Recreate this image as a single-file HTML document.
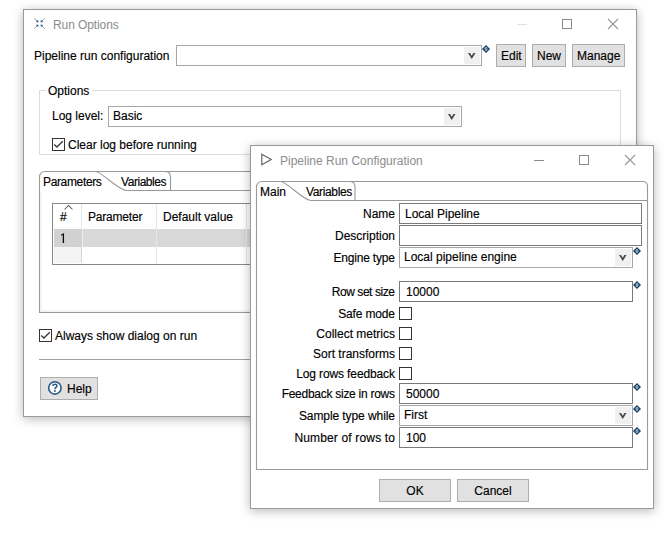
<!DOCTYPE html>
<html><head><meta charset="utf-8">
<style>
html,body{margin:0;padding:0;}
body{width:667px;height:546px;background:#fff;position:relative;overflow:hidden;font-family:"Liberation Sans",sans-serif;font-size:12px;color:#000;}
.a{position:absolute;box-sizing:border-box;}
.t{position:absolute;white-space:nowrap;font-size:12px;line-height:14px;-webkit-text-stroke:0.15px currentColor;}
.win{position:absolute;box-sizing:border-box;background:#fff;border:1px solid #9a9a9a;box-shadow:0 2px 10px rgba(0,0,0,0.28);}
.btn{position:absolute;box-sizing:border-box;background:#e1e1e1;border:1px solid #adadad;}
.fld{position:absolute;box-sizing:border-box;background:#fff;border:1px solid #7a7a7a;}
.cmb{position:absolute;box-sizing:border-box;background:#fff;border:1px solid #a6a6ae;}
.dd{position:absolute;background:#f0f0f0;}
.chk{position:absolute;box-sizing:border-box;width:13px;height:13px;border:1px solid #333;background:#fff;}
.ttl{color:#8c8c8c;-webkit-text-stroke:0;}
svg{position:absolute;overflow:visible;}
</style></head><body>

<!-- ================= RUN OPTIONS WINDOW ================= -->
<div class="win" style="left:23px;top:9px;width:614px;height:408px;"></div>

<!-- icon -->
<svg style="left:34px;top:18px" width="11" height="11" viewBox="0 0 11 11">
 <g stroke="#8aa3b9" stroke-width="1" stroke-linecap="round">
  <line x1="0.6" y1="0.6" x2="3.4" y2="3.4"/><line x1="10.4" y1="0.6" x2="7.6" y2="3.4"/>
  <line x1="0.6" y1="10.4" x2="3.4" y2="7.6"/><line x1="10.4" y1="10.4" x2="7.6" y2="7.6"/>
 </g>
 <g fill="#3f6889"><circle cx="3.4" cy="3.4" r="1.15"/><circle cx="7.6" cy="3.4" r="1.15"/><circle cx="3.4" cy="7.6" r="1.15"/><circle cx="7.6" cy="7.6" r="1.15"/></g>
</svg>
<div class="t ttl" style="left:53px;top:18px;letter-spacing:-0.1px">Run Options</div>
<div class="a" style="left:517px;top:24px;width:10px;height:1px;background:#e0e0e0"></div>
<div class="a" style="left:562px;top:19px;width:10px;height:10px;border:1px solid #8a8a8a"></div>
<svg style="left:608px;top:19px" width="10" height="10" viewBox="0 0 10 10"><path d="M0 0L10 10M10 0L0 10" stroke="#999" stroke-width="1.1"/></svg>

<div class="t" style="left:34px;top:49px;">Pipeline run configuration</div>
<div class="cmb" style="left:176px;top:45px;width:306px;height:21px;"></div>
<div class="dd" style="left:464px;top:47px;width:16px;height:17px;"></div>
<svg style="left:468px;top:53px" width="8" height="6" viewBox="0 0 8 6"><path d="M0 0H2.1L3.75 2.7L5.4 0H7.5L3.75 6Z" fill="#484848"/></svg>
<svg style="left:482px;top:45px" width="8" height="8" viewBox="0 0 8 8"><path d="M4 0L8 4L4 8L0 4Z" fill="#0f3c63"/><path d="M4 1.6L6.4 4L4 6.4L1.6 4Z" fill="#5a7b99"/><path d="M5 2.6Q4 2.2 3.3 2.9Q3 3.6 4 4Q5 4.4 4.7 5.1Q4 5.8 3 5.4" fill="none" stroke="#b9cad8" stroke-width="0.8"/></svg>

<div class="btn" style="left:496px;top:44px;width:30px;height:23px;"></div><div class="t" style="left:501px;top:49px;">Edit</div>
<div class="btn" style="left:532px;top:44px;width:34px;height:23px;"></div><div class="t" style="left:537px;top:49px;">New</div>
<div class="btn" style="left:572px;top:44px;width:53px;height:23px;"></div><div class="t" style="left:577px;top:49px;">Manage</div>

<!-- Options group -->
<div class="a" style="left:39px;top:90px;width:582px;height:65px;border:1px solid #dcdcdc;"></div>
<div class="a" style="left:46px;top:85px;width:46px;height:10px;background:#fff;"></div>
<div class="t" style="left:48px;top:84px;">Options</div>
<div class="t" style="left:52px;top:109px;">Log level:</div>
<div class="cmb" style="left:108px;top:106px;width:354px;height:21px;"></div>
<div class="t" style="left:113px;top:109px;">Basic</div>
<div class="dd" style="left:444px;top:108px;width:16px;height:17px;"></div>
<svg style="left:448px;top:114px" width="8" height="6" viewBox="0 0 8 6"><path d="M0 0H2.1L3.75 2.7L5.4 0H7.5L3.75 6Z" fill="#484848"/></svg>
<div class="chk" style="left:52px;top:138px;"></div>
<svg style="left:52px;top:138px" width="13" height="13" viewBox="0 0 13 13"><path d="M2.2 6.5L4.9 9.1L10.8 3.2" fill="none" stroke="#3a3a3a" stroke-width="1.35"/></svg>
<div class="t" style="left:68px;top:138px;">Clear log before running</div>

<!-- Tab folder RO -->
<svg style="left:0;top:0" width="667" height="546">
 <path d="M39.5 312.5V177.5C39.5 174 41.5 171.5 45.5 171.5H615.5Q620.5 171.5 620.5 176.5V312.5Z" fill="none" stroke="#999" stroke-width="1.1"/>
 <path d="M95.5 171.5C101.5 171.5 118.5 190.5 126.5 190.5H620.5" fill="none" stroke="#999" stroke-width="1.1"/>
 <path d="M165 171.5Q170.5 171.5 170.5 177V190.5" fill="none" stroke="#999" stroke-width="1.1"/>
</svg>
<div class="a" style="left:40px;top:192px;width:2px;height:120px;background:#f3f3f3"></div><div class="a" style="left:40px;top:310px;width:211px;height:2px;background:#f3f3f3"></div>
<div class="t" style="left:43px;top:175px;letter-spacing:-0.35px">Parameters</div>
<div class="t" style="left:121px;top:175px;letter-spacing:-0.45px">Variables</div>

<!-- table -->
<div class="a" style="left:52px;top:203px;width:560px;height:62px;border:1px solid #828790;"></div>
<div class="a" style="left:54px;top:229px;width:557px;height:18px;background:#d9d9d9;"></div><div class="a" style="left:54px;top:229px;width:27px;height:18px;background:#d1d1d1;"></div>

<div class="a" style="left:156px;top:204px;width:1px;height:25px;background:#e5e5e5;"></div>
<div class="a" style="left:246px;top:204px;width:1px;height:25px;background:#e5e5e5;"></div>
<div class="a" style="left:81px;top:204px;width:1px;height:25px;background:#e5e5e5;"></div><div class="a" style="left:54px;top:247px;width:27px;height:16px;background:#f4f4f4;"></div><div class="a" style="left:81px;top:229px;width:1px;height:34px;background:#cfd6e0;"></div><div class="a" style="left:82px;top:229px;width:1px;height:18px;background:#ececec;"></div>
<div class="a" style="left:156px;top:229px;width:1px;height:35px;background:#e3e8ef;"></div>
<div class="a" style="left:246px;top:229px;width:1px;height:35px;background:#e3e8ef;"></div>
<svg style="left:64px;top:205px" width="9" height="5" viewBox="0 0 9 5"><path d="M0.5 4.5L4.5 0.5L8.5 4.5" fill="none" stroke="#555" stroke-width="1.05"/></svg>
<div class="t" style="left:60px;top:210px;">#</div>
<div class="t" style="left:88px;top:210px;letter-spacing:-0.2px">Parameter</div>
<div class="t" style="left:163px;top:210px;">Default value</div>
<svg style="left:60px;top:233px" width="6" height="11" viewBox="0 0 6 11"><path d="M3.4 0.6V10" fill="none" stroke="#000" stroke-width="1.3"/><path d="M3.4 0.9L1 2.3" fill="none" stroke="#000" stroke-width="1"/></svg>

<div class="chk" style="left:39px;top:329px;"></div>
<svg style="left:39px;top:329px" width="13" height="13" viewBox="0 0 13 13"><path d="M2.2 6.5L4.9 9.1L10.8 3.2" fill="none" stroke="#3a3a3a" stroke-width="1.35"/></svg>
<div class="t" style="left:55px;top:329px;">Always show dialog on run</div>
<div class="a" style="left:39px;top:359px;width:582px;height:1px;background:#a0a0a0;"></div>

<div class="btn" style="left:40px;top:377px;width:58px;height:23px;"></div>
<svg style="left:47px;top:380px" width="16" height="16" viewBox="0 0 16 16"><circle cx="7.9" cy="7.9" r="6.2" fill="#fff" stroke="#2d5c85" stroke-width="1.6"/><path d="M5.9 6.1Q5.9 4.2 7.9 4.2Q9.9 4.2 9.9 5.9Q9.9 6.9 8.8 7.5Q7.9 8 7.9 9.3" fill="none" stroke="#2d5c85" stroke-width="1.5"/><circle cx="7.9" cy="11" r="0.95" fill="#2d5c85"/></svg>
<div class="t" style="left:67px;top:382px;">Help</div>

<!-- ================= PIPELINE RUN CONFIGURATION WINDOW ================= -->
<div class="win" style="left:250px;top:145px;width:404px;height:364px;"></div>
<svg style="left:261px;top:154px" width="11" height="11" viewBox="0 0 11 11"><path d="M0.8 0.3L10.2 5.4L0.8 10.8Z" fill="none" stroke="#666" stroke-width="1.2" stroke-linejoin="miter"/></svg>
<div class="t ttl" style="left:280px;top:154px;">Pipeline Run Configuration</div>
<div class="a" style="left:534px;top:160px;width:10px;height:1px;background:#8a8a8a"></div>
<div class="a" style="left:579px;top:155px;width:10px;height:10px;border:1px solid #8a8a8a"></div>
<svg style="left:625px;top:155px" width="10" height="10" viewBox="0 0 10 10"><path d="M0 0L10 10M10 0L0 10" stroke="#999" stroke-width="1.1"/></svg>

<svg style="left:0;top:0" width="667" height="546">
 <path d="M256.5 469.5V187.5C256.5 184 258.5 181.5 262.5 181.5H642.5Q647.5 181.5 647.5 186.5V469.5Z" fill="none" stroke="#999" stroke-width="1.1"/>
 <path d="M280.5 181.5C286.5 181.5 303.5 200.5 311 200.5H647.5" fill="none" stroke="#999" stroke-width="1.1"/>
 <path d="M349.5 181.5Q355 181.5 355 187V200.5" fill="none" stroke="#999" stroke-width="1.1"/>
</svg>
<div class="t" style="left:260px;top:185px;">Main</div>
<div class="t" style="left:306px;top:185px;letter-spacing:-0.35px">Variables</div>

<div class="t" style="left:0;width:395px;text-align:right;top:207px;">Name</div>
<div class="fld" style="left:399px;top:203px;width:243px;height:21px;"></div>
<div class="t" style="left:405px;top:207px;">Local Pipeline</div>

<div class="t" style="left:0;width:395px;text-align:right;top:229px;">Description</div>
<div class="fld" style="left:399px;top:225px;width:243px;height:21px;"></div>

<div class="t" style="left:0;width:394.82px;text-align:right;top:251px;letter-spacing:-0.18px">Engine type</div>
<div class="cmb" style="left:399px;top:247px;width:234px;height:21px;"></div>
<div class="t" style="left:404px;top:250px;">Local pipeline engine</div>
<div class="dd" style="left:615px;top:249px;width:16px;height:17px;"></div>
<svg style="left:619px;top:255px" width="8" height="6" viewBox="0 0 8 6"><path d="M0 0H2.1L3.75 2.7L5.4 0H7.5L3.75 6Z" fill="#484848"/></svg>
<svg style="left:633px;top:247px" width="8" height="8" viewBox="0 0 8 8"><path d="M4 0L8 4L4 8L0 4Z" fill="#0f3c63"/><path d="M4 1.6L6.4 4L4 6.4L1.6 4Z" fill="#5a7b99"/><path d="M5 2.6Q4 2.2 3.3 2.9Q3 3.6 4 4Q5 4.4 4.7 5.1Q4 5.8 3 5.4" fill="none" stroke="#b9cad8" stroke-width="0.8"/></svg>

<div class="t" style="left:0;width:394.57px;text-align:right;top:285px;letter-spacing:-0.43px">Row set size</div>
<div class="fld" style="left:399px;top:281px;width:234px;height:21px;"></div>
<div class="t" style="left:406px;top:285px;">10000</div>
<svg style="left:633px;top:281px" width="8" height="8" viewBox="0 0 8 8"><path d="M4 0L8 4L4 8L0 4Z" fill="#0f3c63"/><path d="M4 1.6L6.4 4L4 6.4L1.6 4Z" fill="#5a7b99"/><path d="M5 2.6Q4 2.2 3.3 2.9Q3 3.6 4 4Q5 4.4 4.7 5.1Q4 5.8 3 5.4" fill="none" stroke="#b9cad8" stroke-width="0.8"/></svg>

<div class="t" style="left:0;width:394.84px;text-align:right;top:307px;letter-spacing:-0.16px">Safe mode</div>
<div class="chk" style="left:399px;top:307px;"></div>
<div class="t" style="left:0;width:395px;text-align:right;top:327px;">Collect metrics</div>
<div class="chk" style="left:399px;top:327px;"></div>
<div class="t" style="left:0;width:395px;text-align:right;top:347px;">Sort transforms</div>
<div class="chk" style="left:399px;top:347px;"></div>
<div class="t" style="left:0;width:394.88px;text-align:right;top:367px;letter-spacing:-0.12px">Log rows feedback</div>
<div class="chk" style="left:399px;top:367px;"></div>

<div class="t" style="left:0;width:394.73px;text-align:right;top:387px;letter-spacing:-0.27px">Feedback size in rows</div>
<div class="fld" style="left:399px;top:383px;width:234px;height:21px;"></div>
<div class="t" style="left:406px;top:387px;">50000</div>
<svg style="left:633px;top:383px" width="8" height="8" viewBox="0 0 8 8"><path d="M4 0L8 4L4 8L0 4Z" fill="#0f3c63"/><path d="M4 1.6L6.4 4L4 6.4L1.6 4Z" fill="#5a7b99"/><path d="M5 2.6Q4 2.2 3.3 2.9Q3 3.6 4 4Q5 4.4 4.7 5.1Q4 5.8 3 5.4" fill="none" stroke="#b9cad8" stroke-width="0.8"/></svg>

<div class="t" style="left:0;width:394.92px;text-align:right;top:409px;letter-spacing:-0.08px">Sample type while</div>
<div class="cmb" style="left:399px;top:405px;width:234px;height:21px;"></div>
<div class="t" style="left:404px;top:408px;">First</div>
<div class="dd" style="left:615px;top:407px;width:16px;height:17px;"></div>
<svg style="left:619px;top:413px" width="8" height="6" viewBox="0 0 8 6"><path d="M0 0H2.1L3.75 2.7L5.4 0H7.5L3.75 6Z" fill="#484848"/></svg>
<svg style="left:633px;top:405px" width="8" height="8" viewBox="0 0 8 8"><path d="M4 0L8 4L4 8L0 4Z" fill="#0f3c63"/><path d="M4 1.6L6.4 4L4 6.4L1.6 4Z" fill="#5a7b99"/><path d="M5 2.6Q4 2.2 3.3 2.9Q3 3.6 4 4Q5 4.4 4.7 5.1Q4 5.8 3 5.4" fill="none" stroke="#b9cad8" stroke-width="0.8"/></svg>

<div class="t" style="left:0;width:395.16px;text-align:right;top:431px;letter-spacing:0.16px">Number of rows to</div>
<div class="fld" style="left:399px;top:427px;width:234px;height:21px;"></div>
<div class="t" style="left:406px;top:431px;">100</div>
<svg style="left:633px;top:427px" width="8" height="8" viewBox="0 0 8 8"><path d="M4 0L8 4L4 8L0 4Z" fill="#0f3c63"/><path d="M4 1.6L6.4 4L4 6.4L1.6 4Z" fill="#5a7b99"/><path d="M5 2.6Q4 2.2 3.3 2.9Q3 3.6 4 4Q5 4.4 4.7 5.1Q4 5.8 3 5.4" fill="none" stroke="#b9cad8" stroke-width="0.8"/></svg>

<div class="btn" style="left:379px;top:479px;width:72px;height:23px;"></div><div class="t" style="left:379px;width:72px;text-align:center;top:484px;">OK</div>
<div class="btn" style="left:457px;top:479px;width:72px;height:23px;"></div><div class="t" style="left:457px;width:72px;text-align:center;top:484px;">Cancel</div>

</body></html>
